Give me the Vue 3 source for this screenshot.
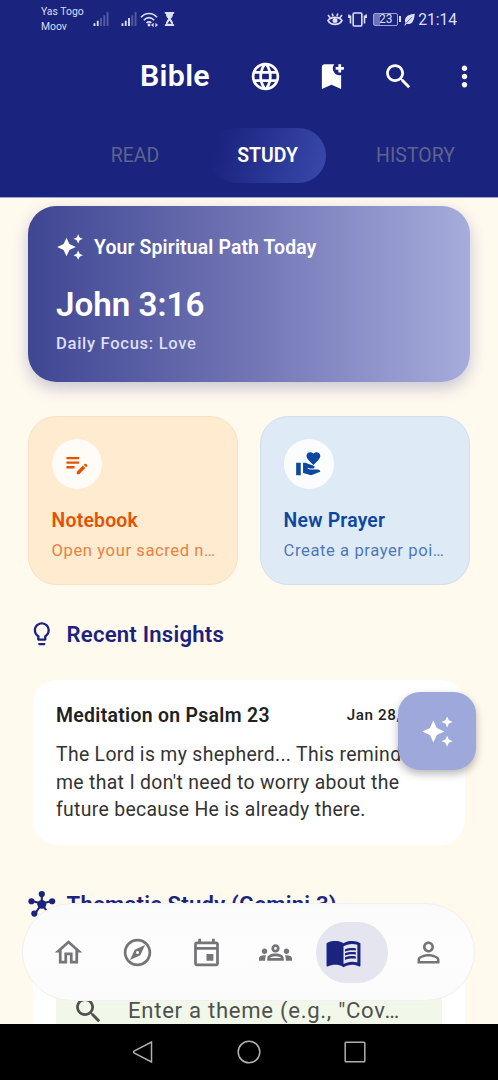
<template>
  <div class="screen">
    <header class="header">
      <div class="status-bar">
        <div class="carriers">
          <span>Yas Togo</span>
          <span>Moov</span>
        </div>
        <svg class="signal first" viewBox="0 0 16 15">
          <path d="M0 12h2v3H0zM3.5 9.5h2V15h-2z" />
          <path class="faded" d="M7 6.5h2V15H7zM10.5 3.5h2V15h-2zM14 0h2v15h-2z" />
        </svg>
        <svg class="signal second" viewBox="0 0 16 15">
          <path d="M0 12h2v3H0zM3.5 9.5h2V15h-2zM7 6.5h2V15H7z" />
          <path class="faded" d="M10.5 3.5h2V15h-2zM14 0h2v15h-2z" />
        </svg>
        <svg class="wifi" viewBox="0 0 18 15">
          <path class="line" d="M1 5.2C5.6 0.3 12.4 0.3 17 5.2M3.8 8.2C7 5.1 11 5.1 14.2 8.2M6.5 11C8 9.6 10 9.6 11.3 10.9" />
          <circle cx="9" cy="13" r="1.4" />
          <path d="M11 13l2.600-2.200v4.400zM18 13l-2.600-2.200v4.400z" />
        </svg>
        <svg class="hourglass" viewBox="0 0 12 15">
          <path d="M1 0h10v2H9.8c0 2.8-1 4-2.5 5.5 1.5 1.5 2.5 2.8 2.5 5.5H11v2H1v-2h1.200c0-2.700 1-4 2.500-5.500C3.200 6 2.200 4.800 2.200 2H1z" />
          <path class="sand" d="M6 9.300l2.300 3.400H3.700z" />
        </svg>
        <div class="status-right">
          <svg class="eye" viewBox="0 0 16 14">
            <path class="line" d="M1 8.500C4 4.300 12 4.300 15 8.500 12 13.700 4 13.700 1 8.500zM1 3l2 2.600M5.200 1.500l.8 2.800M10.800 1.500L10 4.300M15 3l-2 2.600" />
            <circle cx="8" cy="8.600" r="2.500" />
          </svg>
          <svg class="vibrate" viewBox="0 0 19 15">
            <rect class="line" x="5.200" y="1" width="8.600" height="13" rx="1" />
            <path class="line" d="M2.500 3.500v8M16.500 3.500v8M.9 2.500v3.500M18.100 2.500v3.500" />
          </svg>
          <div class="battery"><span>23</span></div>
          <i class="battery-tip"></i>
          <svg class="leaf" viewBox="0 0 12 14">
            <path d="M11.800 .8C7 1.300 2 2.800 1.200 7c-.3 1.500 0 2.700.5 3.500L.4 13.200l.8.5 1.500-2C5 12.500 8 11.800 9.600 9.200 11 6.800 11.300 4 11.800 .8z" />
            <path class="vein" d="M2.300 11L8.500 4.500" />
          </svg>
          <span class="clock">21:14</span>
        </div>
      </div>

      <div class="toolbar">
        <h1>Bible</h1>
        <svg v-for="name in toolbarIcons" :key="name" class="tool" viewBox="0 0 24 24">
          <path :d="icons[name]" />
        </svg>
      </div>

      <nav class="tabs">
        <span class="tab read">READ</span>
        <span class="tab active">STUDY</span>
        <span class="tab history">HISTORY</span>
      </nav>
    </header>

    <main class="content">
      <section class="hero">
        <div class="hero-label">
          <svg viewBox="0 0 24 24"><path :d="icons.sparkle" /></svg>
          <span>Your Spiritual Path Today</span>
        </div>
        <h2>John 3:16</h2>
        <p>Daily Focus: Love</p>
      </section>

      <section class="actions">
        <article v-for="card in actions" :key="card.title" class="action" :class="card.theme">
          <div class="bubble">
            <svg viewBox="0 0 24 24"><path :d="icons[card.icon]" /></svg>
          </div>
          <h3>{{ card.title }}</h3>
          <p>{{ card.text }}</p>
        </article>
      </section>

      <div class="section-title">
        <svg viewBox="0 0 24 24"><path :d="icons.bulb" /></svg>
        <h2>Recent Insights</h2>
      </div>

      <article class="insight">
        <div class="insight-head">
          <h3>Meditation on Psalm 23</h3>
          <time>Jan 28, 2026</time>
        </div>
        <p>The Lord is my shepherd... This reminds<br>me that I don't need to worry about the<br>future because He is already there.</p>
      </article>

      <div class="section-title thematic">
        <svg viewBox="0 0 24 24">
          <path class="hub-line" d="M12 12V4M12 12L3.5 9.5M12 12l8.5-2.5M12 12l-5.5 8M12 12l5.5 8" />
          <circle cx="12" cy="12.5" r="3.9" />
          <circle cx="12" cy="3.5" r="2.7" />
          <circle cx="3" cy="9.8" r="2.7" />
          <circle cx="21" cy="9.8" r="2.7" />
          <circle cx="5.5" cy="20.5" r="2.7" />
          <circle cx="18.500" cy="20.500" r="2.700" />
        </svg>
        <h2>Thematic Study (Gemini 3)</h2>
      </div>

      <section class="theme-card">
        <div class="theme-input">
          <svg viewBox="0 0 24 24"><path :d="icons.search" /></svg>
          <span>Enter a theme (e.g., "Cov…</span>
        </div>
      </section>

      <button class="fab">
        <svg viewBox="0 0 24 24"><path :d="icons.sparkle" /></svg>
      </button>

      <nav class="bottom-nav">
        <div v-for="name in navIcons" :key="name" class="nav-item" :class="{ selected: name === 'book' }">
          <svg viewBox="0 0 24 24"><path :d="icons[name]" /></svg>
        </div>
      </nav>
    </main>

    <footer class="system-bar">
      <svg viewBox="0 0 24 24"><path d="M20.500 2v20L3 12.800q-1-.8 0-1.600z" /></svg>
      <svg viewBox="0 0 24 24"><circle cx="12" cy="12" r="10.800" /></svg>
      <svg viewBox="0 0 24 24"><rect x="2.200" y="2.200" width="19.600" height="19.600" rx=".8" /></svg>
    </footer>
  </div>
</template>

<script setup>
const icons = {
  globe: 'M11.99 2C6.47 2 2 6.48 2 12s4.47 10 9.99 10C17.52 22 22 17.52 22 12S17.52 2 11.99 2zm6.93 6h-2.95c-.32-1.25-.78-2.45-1.38-3.56 1.84.63 3.37 1.91 4.33 3.56zM12 4.04c.83 1.2 1.48 2.53 1.91 3.96h-3.82c.43-1.43 1.08-2.76 1.91-3.96zM4.26 14C4.1 13.36 4 12.69 4 12s.1-1.36.26-2h3.38c-.08.66-.14 1.32-.14 2 0 .68.06 1.34.14 2H4.26zm.82 2h2.95c.32 1.25.78 2.45 1.38 3.56-1.84-.63-3.37-1.9-4.33-3.56zm2.95-8H5.08c.96-1.66 2.49-2.93 4.33-3.56C8.81 5.55 8.35 6.75 8.03 8zM12 19.96c-.83-1.2-1.48-2.53-1.91-3.96h3.82c-.43 1.43-1.08 2.76-1.91 3.96zM14.34 14H9.66c-.09-.66-.16-1.32-.16-2 0-.68.07-1.35.16-2h4.68c.09.65.16 1.32.16 2 0 .68-.07 1.34-.16 2zm.25 5.56c.6-1.11 1.06-2.31 1.38-3.56h2.95c-.96 1.65-2.49 2.93-4.33 3.56zM16.36 14c.08-.66.14-1.32.14-2 0-.68-.06-1.34-.14-2h3.38c.16.64.26 1.31.26 2s-.1 1.36-.26 2h-3.38z',
  bookmark: 'M21 7h-2v2h-2V7h-2V5h2V3h2v2h2v2zm-2 14l-7-3-7 3V5c0-1.1.9-2 2-2h7a5.002 5.002 0 0 0 5 7.9V21z',
  search: 'M15.5 14h-.79l-.28-.27C15.41 12.59 16 11.11 16 9.5 16 5.91 13.09 3 9.5 3S3 5.91 3 9.5 5.91 16 9.5 16c1.61 0 3.09-.59 4.23-1.57l.27.28v.79l5 4.99L20.49 19l-4.99-5zm-6 0C7.01 14 5 11.99 5 9.5S7.01 5 9.5 5 14 7.01 14 9.5 11.99 14 9.5 14z',
  more: 'M12 8c1.1 0 2-.9 2-2s-.9-2-2-2-2 .9-2 2 .9 2 2 2zm0 2c-1.1 0-2 .9-2 2s.9 2 2 2 2-.9 2-2-.9-2-2-2zm0 6c-1.1 0-2 .9-2 2s.9 2 2 2 2-.9 2-2-.9-2-2-2z',
  sparkle: 'M19 9l1.25-2.75L23 5l-2.75-1.25L19 1l-1.25 2.75L15 5l2.75 1.25L19 9zm-7.5.5L9 4 6.5 9.5 1 12l5.5 2.5L9 20l2.5-5.5L17 12l-5.5-2.5zM19 15l-1.25 2.75L15 19l2.75 1.25L19 23l1.25-2.75L23 19l-2.75-1.25L19 15z',
  note: 'M3 10h11v2H3v-2zm0-2h11V6H3v2zm0 8h7v-2H3v2zm15.01-3.13l.71-.71c.39-.39 1.02-.39 1.41 0l.71.71c.39.39.39 1.02 0 1.41l-.71.71-2.12-2.12zm-.71.71l-5.3 5.3V21h2.12l5.3-5.3-2.12-2.12z',
  giving: 'M1 11h4v11H1zM16 3.25C16.65 2.49 17.66 2 18.7 2 20.55 2 22 3.45 22 5.3c0 2.27-2.91 4.9-6 7.7-3.09-2.81-6-5.44-6-7.7C10 3.45 11.45 2 13.3 2c1.04 0 2.05.49 2.7 1.25zM20 17h-7l-2.09-.73.33-.94L13 16h2.82c.65 0 1.18-.53 1.18-1.18 0-.49-.31-.93-.77-1.11L8.97 11H7v9.02L14 22l8.01-3c-.01-1.1-.9-2-2.01-2z',
  bulb: 'M9 21c0 .55.45 1 1 1h4c.55 0 1-.45 1-1v-1H9v1zm3-19C8.14 2 5 5.14 5 9c0 2.38 1.19 4.47 3 5.74V17c0 .55.45 1 1 1h6c.55 0 1-.45 1-1v-2.26c1.81-1.27 3-3.36 3-5.74 0-3.86-3.14-7-7-7zm2.85 11.1l-.85.6V16h-4v-2.3l-.85-.6C7.8 12.16 7 10.63 7 9c0-2.76 2.24-5 5-5s5 2.24 5 5c0 1.63-.8 3.16-2.15 4.1z',
  home: 'M12 5.69l5 4.5V18h-2v-6H9v6H7v-7.81l5-4.5M12 3L2 12h3v8h6v-6h2v6h6v-8h3L12 3z',
  compass: 'M12 2C6.48 2 2 6.48 2 12s4.48 10 10 10 10-4.48 10-10S17.52 2 12 2zm0 18c-4.41 0-8-3.59-8-8s3.59-8 8-8 8 3.59 8 8-3.59 8-8 8zm-5.5-2.5l7.51-3.49L17.5 6.5 9.99 9.99 6.5 17.5zm5.5-6.6c.61 0 1.1.49 1.1 1.1s-.49 1.1-1.1 1.1-1.1-.49-1.1-1.1.49-1.1 1.1-1.1z',
  calendar: 'M19 4h-1V2h-2v2H8V2H6v2H5c-1.11 0-1.99.9-1.99 2L3 20c0 1.1.89 2 2 2h14c1.1 0 2-.9 2-2V6c0-1.1-.9-2-2-2zm0 16H5V10h14v10zm0-12H5V6h14v2zm-7 5h5v5h-5v-5z',
  groups: 'M4 13c1.1 0 2-.9 2-2s-.9-2-2-2-2 .9-2 2 .9 2 2 2zm1.13 1.1c-.37-.06-.74-.1-1.13-.1-.99 0-1.93.21-2.78.58C.48 14.9 0 15.62 0 16.43V18h4.5v-1.61c0-.83.23-1.61.63-2.29zM20 13c1.1 0 2-.9 2-2s-.9-2-2-2-2 .9-2 2 .9 2 2 2zm4 3.43c0-.81-.48-1.53-1.22-1.85-.85-.37-1.79-.58-2.78-.58-.39 0-.76.04-1.13.1.4.68.63 1.46.63 2.29V18H24v-1.57zM16.24 13.65c-1.17-.52-2.61-.9-4.24-.9-1.63 0-3.07.39-4.24.9C6.68 14.13 6 15.21 6 16.39V18h12v-1.61c0-1.18-.68-2.26-1.76-2.74zM8.07 16c.09-.23.13-.39.91-.69.97-.38 1.99-.56 3.02-.56s2.05.18 3.02.56c.77.3.81.46.91.69H8.07zM12 8c.55 0 1 .45 1 1s-.45 1-1 1-1-.45-1-1 .45-1 1-1m0-2c-1.66 0-3 1.34-3 3s1.34 3 3 3 3-1.34 3-3-1.34-3-3-3z',
  book: 'M21 5c-1.11-.35-2.33-.5-3.5-.5-1.95 0-4.05.4-5.5 1.5-1.45-1.1-3.55-1.5-5.5-1.5S2.45 4.9 1 6v14.65c0 .25.25.5.5.5.1 0 .15-.05.25-.05C3.1 20.45 5.05 20 6.5 20c1.95 0 4.05.4 5.5 1.5 1.35-.85 3.8-1.5 5.5-1.5 1.65 0 3.35.3 4.75 1.05.1.05.15.05.25.05.25 0 .5-.25.5-.5V6c-.6-.45-1.25-.75-2-1zm0 13.5c-1.1-.35-2.3-.5-3.5-.5-1.7 0-4.15.65-5.5 1.5V8c1.35-.85 3.8-1.5 5.5-1.5 1.2 0 2.4.15 3.5.5v11.5zM17.5 10.5c.88 0 1.73.09 2.5.26V9.24c-.79-.15-1.64-.24-2.5-.24-1.7 0-3.24.29-4.5.83v1.66c1.13-.64 2.7-.99 4.5-.99zM13 12.49v1.66c1.13-.64 2.7-.99 4.5-.99.88 0 1.73.09 2.5.26V11.9c-.79-.15-1.64-.24-2.5-.24-1.7 0-3.24.3-4.5.83zM17.5 14.33c-1.7 0-3.24.29-4.5.83v1.66c1.13-.64 2.7-.99 4.5-.99.88 0 1.73.09 2.5.26v-1.52c-.79-.16-1.64-.24-2.5-.24z',
  person: 'M12 5.9c1.16 0 2.1.94 2.1 2.1s-.94 2.1-2.1 2.1S9.9 9.16 9.9 8s.94-2.1 2.1-2.1m0 9c2.97 0 6.1 1.46 6.1 2.1v1.1H5.9V17c0-.64 3.13-2.1 6.1-2.1M12 4C9.79 4 8 5.79 8 8s1.79 4 4 4 4-1.79 4-4-1.79-4-4-4zm0 9c-2.67 0-8 1.34-8 4v3h16v-3c0-2.66-5.33-4-8-4z'
};

const toolbarIcons = ['globe', 'bookmark', 'search', 'more'];
const navIcons = ['home', 'compass', 'calendar', 'groups', 'book', 'person'];

const actions = [
  { title: 'Notebook', text: 'Open your sacred n…', icon: 'note', theme: 'orange' },
  { title: 'New Prayer', text: 'Create a prayer poi…', icon: 'giving', theme: 'blue' }
];
</script>

<style>
body {
  margin: 0;
  background: #000;
}
</style>

<style scoped>
.screen {
  width: 498px;
  height: 1080px;
  display: flex;
  flex-direction: column;
  overflow: hidden;
  font-family: Roboto, "Noto Sans", sans-serif;
  color: #212121;
}

.screen * {
  box-sizing: border-box;
}

h1, h2, h3, p {
  margin: 0;
}

svg {
  display: block;
  flex: none;
  fill: currentColor;
}

.line {
  fill: none;
  stroke: currentColor;
  stroke-width: 1.6;
}

.header {
  height: 198px;
  flex: none;
  background: #1a237e;
  color: #fff;
  border-bottom: 1px solid #9fa3d0;
}

.status-bar {
  height: 38px;
  padding: 0 41px;
  display: flex;
  align-items: center;
  color: #dcdff5;
}

.carriers {
  width: 52px;
  display: flex;
  flex-direction: column;
  font-size: 10.4px;
  line-height: 15px;
  white-space: nowrap;
}

.signal {
  width: 16px;
  height: 14px;
}

.second {
  margin-left: 12px;
}

.faded {
  opacity: 0.3;
}

.wifi {
  width: 18px;
  height: 15px;
  margin-left: 3px;
}

.hourglass {
  width: 13px;
  height: 14px;
  margin-left: 5px;
}

.sand {
  fill: #1a237e;
}

.status-right {
  margin-left: auto;
  display: flex;
  align-items: center;
}

.eye {
  width: 16px;
  height: 14px;
}

.vibrate {
  width: 19px;
  height: 15px;
  margin-left: 5px;
}

.battery {
  width: 25px;
  height: 13px;
  margin-left: 6px;
  border: 1px solid #9fa4d8;
  border-radius: 2px;
  background: linear-gradient(90deg, #6c72b4 25%, transparent 25%);
  font-size: 12px;
  line-height: 11px;
  text-align: center;
}

.battery-tip {
  width: 2px;
  height: 6px;
  margin-left: 1px;
  background: currentColor;
}

.leaf {
  width: 11px;
  height: 13px;
  margin: 0 3px 0 3px;
}

.vein {
  fill: none;
  stroke: #1a237e;
  stroke-width: 0.7;
}

.clock {
  padding-top: 1px;
  font-size: 15.6px;
}

.toolbar {
  height: 76px;
  padding-left: 140px;
  display: flex;
  align-items: center;
}

h1 {
  flex: none;
  width: 109px;
  margin-top: -2px;
  font-size: 30.4px;
  font-weight: 600;
  letter-spacing: 0.3px;
}

.tool {
  width: 33px;
  height: 33px;
  margin-right: 33.4px;
}

.tabs {
  display: flex;
  align-items: center;
  height: 83px;
  font-size: 19.4px;
}

.tab {
  color: #5f638d;
  text-align: center;
}

.read {
  width: 50px;
  margin-left: 110px;
}

.tab.active {
  width: 117px;
  margin-left: 49px;
  height: 55px;
  line-height: 56px;
  border-radius: 28px;
  background: linear-gradient(105deg, #1a237e 8%, #3949ab);
  color: #fff;
  font-weight: 600;
}

.history {
  margin-left: 50px;
  letter-spacing: 0.1px;
}

.content {
  position: relative;
  flex: 1;
  min-height: 0;
  overflow: hidden;
  padding: 8px 28px 0;
  background: #fff9ee;
}

.hero {
  height: 176px;
  padding: 25px 28px 0;
  border-radius: 28px;
  background: linear-gradient(90deg, #3f4692, #7175b5 50%, #a6acdb);
  box-shadow: 0 6px 16px rgba(26, 35, 126, 0.24);
  color: #fff;
}

.hero-label {
  display: flex;
  align-items: center;
  height: 32px;
  gap: 10px;
  font-size: 19.4px;
  font-weight: 600;
  letter-spacing: 0.14px;
}

.hero-label svg {
  width: 28px;
  height: 28px;
}

.hero h2 {
  margin-top: 20px;
  font-size: 33.2px;
  line-height: 44px;
  font-weight: 600;
}

.hero p {
  margin-top: 6px;
  font-size: 16.6px;
  line-height: 22px;
  font-weight: 500;
  letter-spacing: 0.68px;
  color: #dedff1;
}

.actions {
  margin-top: 34px;
  display: grid;
  grid-template-columns: 210px 210px;
  gap: 22px;
}

.action {
  height: 169px;
  padding: 22px 22px 0 22.6px;
  border: 1.4px solid;
  border-radius: 28px;
}

.orange {
  background: #feebd0;
  border-color: #fae1c3;
  color: #e65100;
}

.blue {
  background: #deebf7;
  border-color: #cfdff0;
  color: #0d47a1;
}

.bubble {
  width: 50px;
  height: 50px;
  display: flex;
  align-items: center;
  justify-content: center;
  border-radius: 50%;
  background: rgba(255, 255, 255, 0.85);
}

.bubble svg {
  width: 27.6px;
  height: 27.6px;
}

.action h3 {
  margin-top: 19px;
  font-size: 19.4px;
  line-height: 25px;
  font-weight: 600;
  letter-spacing: 0.2px;
}

.action p {
  margin-top: 7px;
  font-size: 16.6px;
  line-height: 22px;
  letter-spacing: 0.58px;
  opacity: 0.7;
  white-space: nowrap;
}

.section-title {
  height: 36px;
  margin-top: 31px;
  display: flex;
  align-items: center;
  gap: 11px;
  color: #1a237e;
}

.section-title svg {
  width: 27.6px;
  height: 27.6px;
}

.section-title h2 {
  font-size: 22.1px;
  font-weight: 600;
  letter-spacing: 0.22px;
}

.insight {
  height: 165px;
  margin: 28px 5px 0;
  padding: 22px 23px 0;
  border-radius: 24px;
  background: #fff;
}

.insight-head {
  display: flex;
  align-items: center;
  justify-content: space-between;
  height: 26px;
}

.insight h3 {
  font-size: 19.4px;
  font-weight: 600;
  letter-spacing: 0.32px;
}

time {
  font-size: 15.2px;
  font-weight: 500;
  letter-spacing: 0.62px;
  white-space: nowrap;
}

.insight p {
  margin-top: 13px;
  font-size: 19.4px;
  line-height: 27.7px;
  letter-spacing: 0.32px;
  color: #333;
  white-space: nowrap;
}

.thematic {
  margin-top: 41px;
}

.hub-line {
  stroke: currentColor;
  stroke-width: 1.8;
}

.theme-card {
  height: 200px;
  margin: 27px 5px 0;
  padding: 23px;
  background: #fff;
}

.theme-input {
  height: 76px;
  padding: 0 16px;
  display: flex;
  align-items: center;
  gap: 23px;
  background: #f1f8e9;
  color: #505050;
  font-size: 22.1px;
  letter-spacing: 0.72px;
  white-space: nowrap;
}

.theme-input svg {
  width: 33px;
  height: 33px;
}

.fab {
  position: absolute;
  left: 398px;
  top: 494px;
  width: 78px;
  height: 78px;
  padding: 0;
  display: flex;
  align-items: center;
  justify-content: center;
  border: none;
  border-radius: 22px;
  background: #9fa8da;
  box-shadow: 0 4px 8px rgba(0, 0, 0, 0.28);
  color: #fff;
}

.fab svg {
  width: 33px;
  height: 33px;
}

.bottom-nav {
  position: absolute;
  left: 22px;
  top: 705px;
  width: 453px;
  height: 98px;
  padding-left: 11px;
  display: flex;
  align-items: center;
  border: 1px solid #f1f0f0;
  border-radius: 49px;
  background: linear-gradient(#fafafb, #fdfdfd 40%, #fafbfa);
  color: #757578;
}

.nav-item {
  width: 69px;
  display: flex;
  justify-content: center;
}

.nav-item svg {
  width: 33px;
  height: 33px;
}

.nav-item.selected {
  width: 72px;
  height: 61px;
  margin: 0 6px;
  padding-left: 9px;
  align-items: center;
  justify-content: flex-start;
  border-radius: 31px;
  background: #e4e5ee;
  color: #1a237e;
}

.nav-item.selected svg {
  width: 37px;
  height: 37px;
}

.system-bar {
  height: 56px;
  flex: none;
  padding-left: 131px;
  display: flex;
  align-items: center;
  gap: 82px;
  background: #000;
  color: #b0b0b0;
}

.system-bar svg {
  width: 24px;
  height: 24px;
  fill: none;
  stroke: currentColor;
  stroke-width: 1.5;
}
</style>
